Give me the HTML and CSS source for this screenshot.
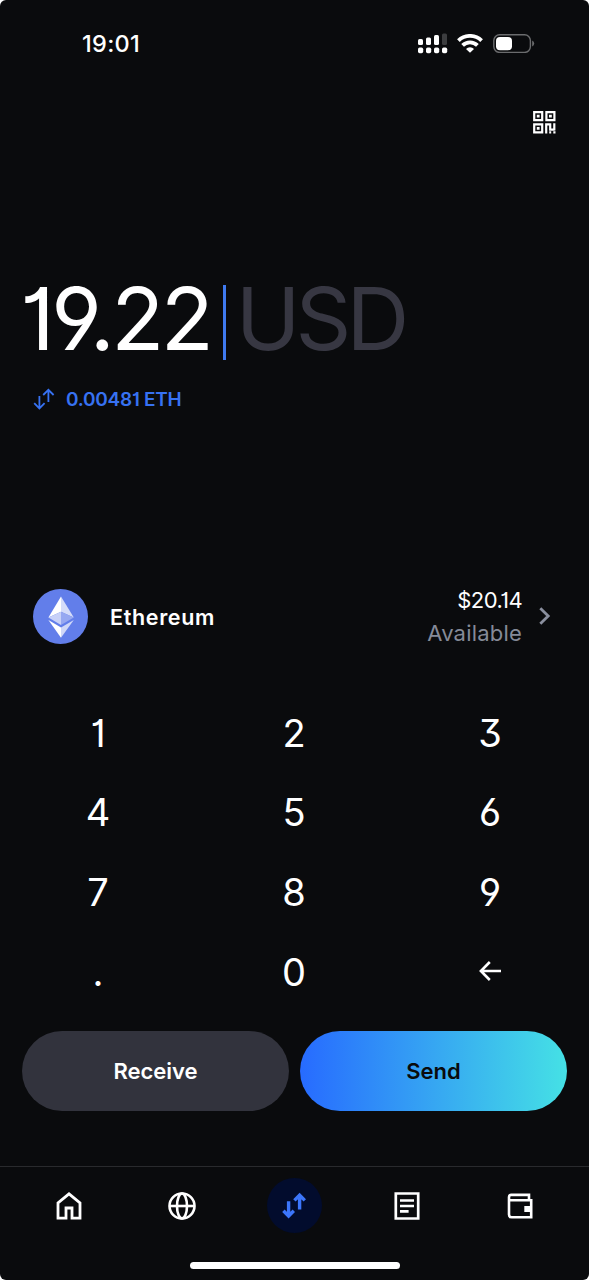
FILE: index.html
```html
<!DOCTYPE html>
<html lang="en">
<head>
<meta charset="utf-8">
<title>Send</title>
<link rel="stylesheet" href="styles.css">
</head>
<body>
<main class="screen">
  <header class="status">
    <span class="time">19:01</span>
    <div class="status-icons">
      <svg width="30" height="21" viewBox="0 0 30 21" fill="#fff">
        <rect x="0" y="6" width="5" height="6" rx="1.5"/><rect x="8" y="4.5" width="5" height="7.5" rx="1.5"/><rect x="16" y="2" width="5" height="10" rx="1.5"/><rect x="24" y="0.5" width="5" height="11.5" rx="1.5" fill="#3c3d3f"/>
        <rect x="0" y="14.6" width="5.2" height="5.6" rx="1.7"/><rect x="8" y="14.6" width="5.2" height="5.6" rx="1.7"/><rect x="16" y="14.6" width="5.2" height="5.6" rx="1.7"/><rect x="24" y="14.6" width="5.2" height="5.6" rx="1.7"/>
      </svg>
      <svg class="wifi" width="26" height="19" viewBox="0 0 26 19" fill="none" stroke="#fff" stroke-width="3.8">
        <path d="M1.4 6.6a16.6 16.6 0 0 1 23.2 0"/><path d="M5.6 11.4a10.4 10.4 0 0 1 14.8 0"/><path d="M9 14.9a5.6 5.6 0 0 1 8 0L13 18.8z" fill="#fff" stroke="none"/>
      </svg>
      <svg class="battery" width="42" height="19" viewBox="0 0 42 19">
        <rect x=".8" y=".8" width="36.6" height="17.6" rx="5.8" fill="none" stroke="#6b6c6e" stroke-width="1.4"/>
        <rect x="3" y="3" width="16" height="13.2" rx="4" fill="#fff"/><path d="M39.2 6.6q2 .8 2 3t-2 3z" fill="#6b6c6e"/>
      </svg>
    </div>
  </header>
  <div class="toolbar">
    <svg width="23" height="23" viewBox="0 0 23 23" fill="none" stroke="#fff" stroke-width="2.2">
      <path d="M1.2 1.2h8v8h-8zM13.4 1.2h8v8h-8zM1.2 13.4h8v8h-8z"/>
      <path d="M3.8 3.8h2.8v2.8H3.8zM16 3.8h2.8v2.8H16zM3.8 16h2.8v2.8H3.8z" fill="#fff" stroke="none"/>
      <path d="M13.2 22.4v-9h4v5.2h4.2M21.3 12.2v7.4M16.2 21.4h2M20.3 21.4h2.2"/>
    </svg>
  </div>
  <section class="amount">
    <div class="amount-line"><span class="value">19.22</span><span class="caret"></span><span class="currency">USD</span></div>
    <div class="convert">
      <svg width="22" height="22" viewBox="0 0 22 22" fill="none" stroke="#3772f2" stroke-width="1.8"><path d="M6.4 8v12M1.2 15.2l5.2 5.2 5.2-5.2M15.4 14V2M10.2 7l5.2-5.2L20.6 7"/></svg>
      <span>0.00481 ETH</span>
    </div>
  </section>
  <section class="asset">
    <svg width="55" height="55" viewBox="0 0 55 55">
      <circle cx="27.5" cy="27.5" r="27.5" fill="#627eea"/>
      <path d="M28 7.5L15.4 28.5 28 22.8z" fill="#fff"/><path d="M28 7.5l12.8 21L28 22.8z" fill="#d5dcf9"/>
      <path d="M15.4 28.5L28 22.8V36z" fill="#c8d1f8"/><path d="M40.8 28.5L28 22.8V36z" fill="#97a8f1"/>
      <path d="M15.4 31L28 38.4v10.4z" fill="#fff"/><path d="M40.8 31L28 38.4v10.4z" fill="#d0d8f8"/>
    </svg>
    <span class="asset-name">Ethereum</span>
    <div class="balance"><span class="usd">$20.14</span><span class="available">Available</span></div>
    <svg class="chevron" width="12" height="18" viewBox="0 0 12 18" fill="none" stroke="#8a8f9e" stroke-width="2.8"><path d="M1.3 1.3L9.2 9l-7.9 7.7"/></svg>
  </section>
  <section class="keypad">
    <span>1</span><span>2</span><span>3</span>
    <span>4</span><span>5</span><span>6</span>
    <span>7</span><span>8</span><span>9</span>
    <span>.</span><span>0</span>
    <span><svg class="back" width="22" height="20" viewBox="0 0 22 20" fill="none" stroke="#fff" stroke-width="2.6"><path d="M22 10H2M10.8 1L1.9 10l8.9 9"/></svg></span>
  </section>
  <section class="actions">
    <button class="btn receive">Receive</button>
    <button class="btn send">Send</button>
  </section>
  <nav class="tabs">
    <span><svg width="26" height="28" viewBox="0 0 26 28" fill="none" stroke="#fff" stroke-width="2.8"><path d="M2 26.2V11L13 1.9 24 11v15.2h-8V16h-6v10.2z"/></svg></span>
    <span><svg width="28" height="28" viewBox="0 0 28 28" fill="none" stroke="#fff" stroke-width="2.6"><circle cx="14" cy="14" r="12.5"/><ellipse cx="14" cy="14" rx="5" ry="12.5"/><path d="M1.5 14h25"/></svg></span>
    <span class="active"><svg width="24" height="27" viewBox="0 0 24 27" fill="none" stroke="#3c76fb" stroke-width="3.4"><path d="M6.6 9.2v14.4M1.4 18.8L6.6 24l5.2-5.2M17.6 17.6V3.4M12.4 8.4l5.2-5.2 5.2 5.2"/></svg></span>
    <span><svg width="26" height="28" viewBox="0 0 26 28" fill="none" stroke="#fff" stroke-width="2.7"><path d="M1.8 1.5h22.4v25H1.8zM6 8.5h14M6 14h14M6 19.3h8.6"/></svg></span>
    <span><svg width="26" height="26" viewBox="0 0 26 26" fill="none" stroke="#fff" stroke-width="2.6"><path d="M22 7.3V1.9H4Q2 1.9 2 4v17.5q0 2.8 2.8 2.8H24.2V7.3H2"/><path d="M17.3 13h6.5v6h-6.5z" fill="#fff" stroke="none"/></svg></span>
  </nav>
  <div class="home-row"><div class="home-indicator"></div></div>
</main>
</body>
</html>
```
FILE: styles.css
```css
* { box-sizing: border-box; }
body { margin: 0; background: #fff; font-family: Inter, "Liberation Sans", sans-serif; }
.screen {
  display: flex; flex-direction: column; width: 589px; height: 1280px;
  background: #0a0b0d; color: #fff; border-radius: 6px; overflow: hidden;
  font-feature-settings: "cv01", "cv03", "cv04", "cv09";
}
svg { display: block; flex: none; }
.status { display: flex; justify-content: space-between; height: 88px; padding: 0 54px 0 82px; font-feature-settings: normal; }
.time { font-size: 23.5px; line-height: 88px; font-weight: 550; letter-spacing: .3px; }
.status-icons { display: flex; align-items: center; }
.status-icons svg { margin-bottom: 1px; }
.status-icons .wifi { margin-left: 9px; }
.status-icons .battery { margin-left: 10px; }
.toolbar { display: flex; justify-content: flex-end; height: 182px; padding: 23px 33px 0 0; }
.amount { height: 305px; padding: 0 24px 0 20px; }
.amount-line { display: flex; align-items: center; height: 97px; font-size: 87px; letter-spacing: -3.5px; line-height: 97px; }
.caret { width: 3px; height: 75px; margin: 7px 10px 0 12.5px; background: #3f7af0; }
.currency { color: #373742; letter-spacing: -5px; }
.convert { display: flex; align-items: center; height: 24px; margin: 20px 0 0 13px; gap: 11px; color: #3772f2; font-size: 19px; font-weight: 600; letter-spacing: -.25px; }
.asset { display: flex; align-items: center; height: 82px; padding: 0 38px 0 33px; }
.asset-name { margin: 1px 0 0 22px; font-size: 21.5px; font-weight: 600; letter-spacing: .65px; }
.balance { display: flex; flex-direction: column; align-items: flex-end; margin: 1px 0 0 auto; font-size: 22px; line-height: 33px; }
.usd { letter-spacing: -.6px; }
.available { color: #858a98; letter-spacing: .2px; }
.chevron { margin-left: 17px; }
.keypad { display: grid; grid-template-columns: repeat(3, 1fr); grid-auto-rows: 79.6px; height: 338px; padding: 36px 1px 0 0; font-size: 38px; }
.keypad span { display: flex; align-items: center; justify-content: center; }
.keypad .back { margin-bottom: 2px; }
.actions { display: grid; grid-template-columns: 1fr 1fr; gap: 11px; height: 171px; padding: 36px 22px 55px; }
.btn { border: 0; border-radius: 40px; font: 600 22px Inter, sans-serif; color: #fff; }
.receive { background: #32333d; }
.send { background: linear-gradient(90deg, #276bff, #45e1e5); color: #0a0b0d; }
.tabs { display: grid; grid-template-columns: repeat(5, 1fr); height: 96px; padding: 11px 13px 0; border-top: 1px solid #292a2d; }
.tabs span { display: flex; align-items: center; justify-content: center; width: 55px; height: 55px; justify-self: center; }
.tabs .active { border-radius: 50%; background: #020c2d; }
.home-row { display: flex; justify-content: center; height: 18px; }
.home-indicator { width: 210px; height: 7px; border-radius: 4px; background: #fff; }
```
